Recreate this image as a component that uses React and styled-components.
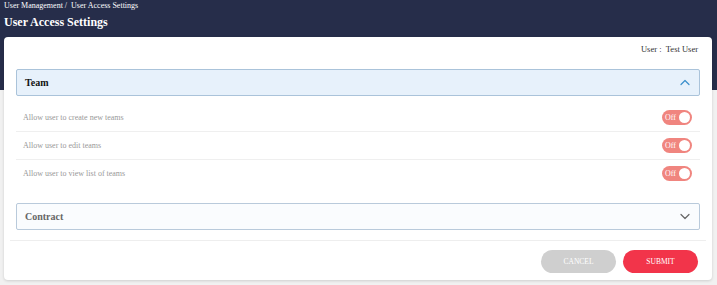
import { styled, createGlobalStyle } from "styled-components";

const GlobalStyle = createGlobalStyle`
  html, body {
    margin: 0;
    padding: 0;
  }
  body {
    font-family: "Liberation Serif", "Times New Roman", serif;
    background: #f1f1f1;
  }
`;

const permissions = [
  "Allow user to create new teams",
  "Allow user to edit teams",
  "Allow user to view list of teams",
];

const Chevron = ({ up, color }) => (
  <svg width="10" height="7" viewBox="0 0 10 7">
    <path
      d={up ? "M1 5.5 L5 1.5 L9 5.5" : "M1 1.5 L5 5.5 L9 1.5"}
      fill="none"
      stroke={color}
      strokeWidth="1.2"
      strokeLinecap="round"
      strokeLinejoin="round"
    />
  </svg>
);

const App = () => {
  return (
    <Page>
      <GlobalStyle />
      <Breadcrumb>User Management /&nbsp;&nbsp;User Access Settings</Breadcrumb>
      <Title>User Access Settings</Title>

      <Card>
        <UserLine>User :&nbsp;&nbsp;Test User</UserLine>

        <Accordion $open>
          <AccordionHeader $open>
            <span>Team</span>
            <Chevron up color="#3b8fcb" />
          </AccordionHeader>
          <AccordionBody>
            {permissions.map((label, i) => (
              <Row key={label} $last={i === permissions.length - 1}>
                <span>{label}</span>
                <Toggle>
                  <span>Off</span>
                  <Knob />
                </Toggle>
              </Row>
            ))}
          </AccordionBody>
        </Accordion>

        <Accordion>
          <AccordionHeader>
            <span>Contract</span>
            <Chevron color="#666" />
          </AccordionHeader>
        </Accordion>

        <Footer>
          <Button $variant="cancel">CANCEL</Button>
          <Button $variant="submit">SUBMIT</Button>
        </Footer>
      </Card>
    </Page>
  );
};

const Page = styled.div`
  min-height: 285px;
  padding: 1px 5px 0 4px;
  box-sizing: border-box;
  background: linear-gradient(#262d4a 0, #262d4a 90px, #f1f1f1 90px);
`;

const Breadcrumb = styled.div`
  color: #fff;
  font-size: 8px;
  line-height: 10px;
`;

const Title = styled.h1`
  margin: 4px 0 0;
  color: #fff;
  font-size: 12px;
  font-weight: bold;
  line-height: 14px;
`;

const Card = styled.div`
  margin-top: 8px;
  background: #fff;
  border-radius: 4px;
  box-shadow: 0 1px 3px rgba(0, 0, 0, 0.15);
  padding: 6px 12px 7px;
`;

const UserLine = styled.div`
  text-align: right;
  padding-right: 2px;
  font-size: 8.5px;
  line-height: 12px;
  color: #333;
`;

const Accordion = styled.div`
  margin-top: ${(p) => (p.$open ? "14px" : "16px")};
`;

const AccordionHeader = styled.div`
  height: 27px;
  box-sizing: border-box;
  display: flex;
  align-items: center;
  justify-content: space-between;
  padding: 0 9px 0 8px;
  border: 1px solid ${(p) => (p.$open ? "#aac3da" : "#b9cadb")};
  border-radius: 2px;
  background: ${(p) => (p.$open ? "#e7f1fb" : "#fafcfe")};
  font-size: 10px;
  font-weight: bold;
  color: ${(p) => (p.$open ? "#111" : "#666")};
`;

const AccordionBody = styled.div`
  padding-top: 8px;
`;

const Row = styled.div`
  height: 27px;
  display: flex;
  align-items: center;
  justify-content: space-between;
  padding: 0 8px 0 7px;
  border-bottom: ${(p) => (p.$last ? "none" : "1px solid #efefef")};
  font-size: 8px;
  color: #999;
`;

const Toggle = styled.div`
  width: 30px;
  height: 15px;
  box-sizing: border-box;
  border-radius: 8px;
  background: #f0857f;
  display: flex;
  align-items: center;
  justify-content: space-between;
  padding: 0 2px 0 3px;
  color: #fff;
  font-size: 8px;
`;

const Knob = styled.div`
  width: 11px;
  height: 11px;
  border-radius: 50%;
  background: #fff;
`;

const Footer = styled.div`
  margin: 10px -6px 0;
  padding: 9px 8px 0;
  border-top: 1px solid #eeeeee;
  display: flex;
  justify-content: flex-end;
  gap: 7px;
`;

const Button = styled.button`
  width: 75px;
  height: 23px;
  border: none;
  border-radius: 12px;
  font-family: inherit;
  font-size: 7.5px;
  color: #fff;
  background: ${(p) => (p.$variant === "submit" ? "#f2344a" : "#cfcfcf")};
`;

export default App;
